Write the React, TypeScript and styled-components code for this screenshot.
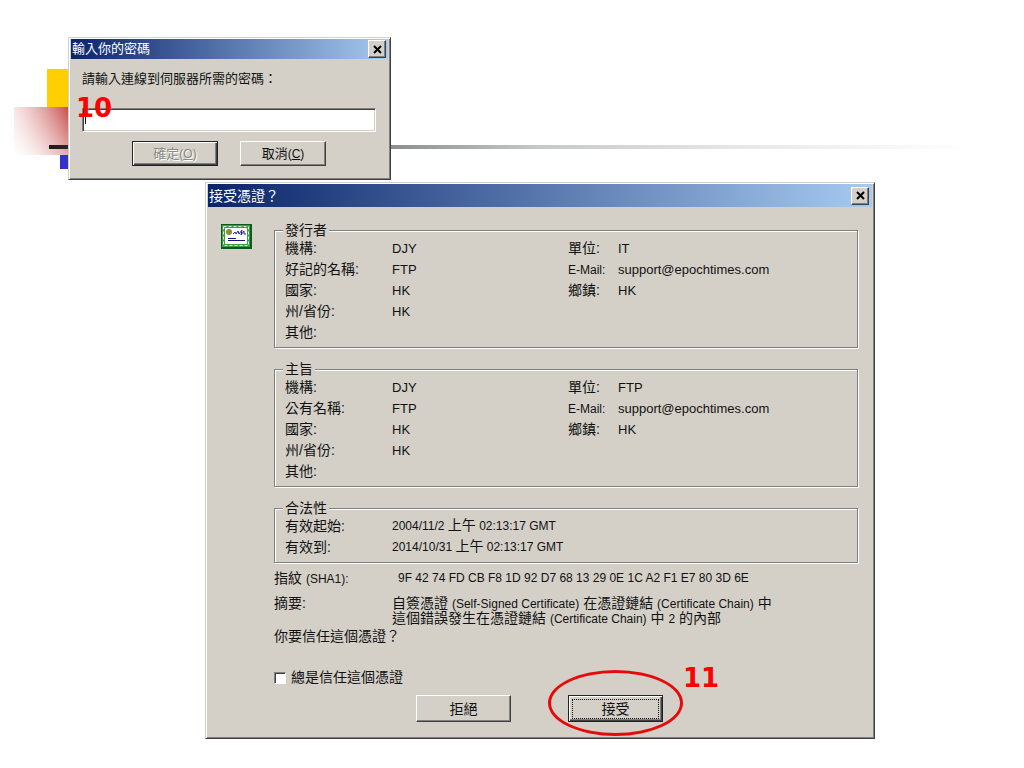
import React from "react";
import styled, { createGlobalStyle, css } from "styled-components";

const face = "#d4d0c8";
const sans = `"Liberation Sans", "Noto Sans CJK TC", sans-serif`;

const GlobalStyle = createGlobalStyle`
  * { box-sizing: border-box; }
  body { margin: 0; background: #fff; color: #111; font-family: ${sans}; }
`;

const Slide = styled.main`
  position: relative;
  min-height: 100vh;
  overflow: hidden;
  background: #fff;
`;

const YellowBlock = styled.div`
  position: absolute;
  left: 47px;
  top: 69px;
  width: 60px;
  height: 50px;
  background: #ffcf01;
`;

const RedBlock = styled.div`
  position: absolute;
  left: 14px;
  top: 107px;
  width: 60px;
  height: 48px;
  background:
    linear-gradient(to top right, #fff 0%, rgba(255, 255, 255, 0.6) 40%, rgba(255, 255, 255, 0) 100%),
    linear-gradient(to right, #f0cccc 0%, #bf3636 100%);
`;

const BlueBlock = styled.div`
  position: absolute;
  left: 60px;
  top: 155px;
  width: 50px;
  height: 14px;
  background: #3333cc;
`;

const Rule = styled.div`
  position: absolute;
  left: 49px;
  right: 54px;
  top: 145px;
  height: 4px;
  background: linear-gradient(to right, #1c1c1c 0%, #2a2a2a 3%, #8c8e8d 37%, #c6c7c7 53%, #e6e6e6 74%, #fff 100%);
`;

const Window = styled.section<{ $x: number; $y: number; $w: number }>`
  position: absolute;
  left: ${(p) => p.$x}px;
  top: ${(p) => p.$y}px;
  width: ${(p) => p.$w}px;
  padding: 1px;
  background: ${face};
  border: 1px solid;
  border-color: ${face} #404040 #404040 ${face};
  box-shadow: inset 1px 1px 0 #fff, inset -1px -1px 0 #808080;
`;

const TitleBar = styled.header<{ $large?: boolean }>`
  display: flex;
  align-items: center;
  justify-content: space-between;
  height: ${(p) => (p.$large ? 23 : 20)}px;
  margin: 0 1px;
  padding: 0 ${(p) => (p.$large ? 3 : 2)}px 0 1px;
  background: linear-gradient(to right, #0a246a, #a6caf0);
`;

const Title = styled.h1<{ $large?: boolean }>`
  margin: 0;
  color: #fff;
  font-size: ${(p) => (p.$large ? 14 : 13)}px;
  font-weight: 400;
  line-height: 18px;
`;

const raised = css`
  border: 1px solid;
  border-color: #fff #404040 #404040 #fff;
  box-shadow: inset -1px -1px 0 #808080;
  background: ${face};
`;

const CloseButton = styled.button`
  ${raised}
  display: grid;
  place-items: center;
  width: 18px;
  height: 18px;
  padding: 0;
`;

const Button = styled.button<{ $w: number; $h: number; $default?: boolean }>`
  ${raised}
  width: ${(p) => p.$w}px;
  height: ${(p) => p.$h}px;
  padding: 0;
  color: #111;
  font-family: ${sans};
  font-size: ${(p) => (p.$w > 90 ? 14 : 13)}px;
  line-height: 18px;
  ${(p) =>
    p.$default &&
    css`
      border-color: #222;
      box-shadow: inset 1px 1px 0 #fff, inset -1px -1px 0 #404040, inset -2px -2px 0 #808080;
    `}
  &:disabled {
    color: #8a8880;
    text-shadow: 1px 1px 0 #fff;
  }
`;

const FocusRing = styled.span`
  display: block;
  margin: 0 4px;
  outline: 1px dotted #111;
`;

const Latin = styled.span<{ $small?: boolean }>`
  font-size: ${(p) => (p.$small ? 12 : 13)}px;
  line-height: 1;
`;

const PasswordForm = styled.form`
  display: flex;
  flex-direction: column;
  padding: 11px 13px 12px 12px;
`;

const PasswordLabel = styled.label`
  font-size: 13px;
  line-height: 18px;
`;

const PasswordInput = styled.input`
  width: 100%;
  height: 24px;
  margin-top: 20px;
  border: 1px solid;
  border-color: #808080 #fff #fff #808080;
  border-radius: 0;
  outline: 0;
  background: linear-gradient(#111, #111) 2px 2px / 1px 13px no-repeat #fff;
  box-shadow: inset 1px 1px 0 #404040, inset -1px -1px 0 ${face};
`;

const ButtonRow = styled.div<{ $gap: number; $top: number }>`
  display: flex;
  justify-content: center;
  gap: ${(p) => p.$gap}px;
  margin-top: ${(p) => p.$top}px;
`;

const CertificateBody = styled.div`
  padding: 15px 15px 15px 14px;
`;

const Columns = styled.div`
  display: grid;
  grid-template-columns: 31px 1fr;
  column-gap: 22px;
`;

const CertificateIcon = styled.svg`
  display: block;
  margin-top: 2px;
`;

const Details = styled.div`
  display: flex;
  flex-direction: column;
  min-width: 0;
  font-size: 14px;
  line-height: 21px;
`;

const Group = styled.fieldset`
  min-width: 0;
  margin: 0 0 13px;
  padding: 0 0 4px 10px;
  border: 1px solid #808080;
  box-shadow: 1px 1px 0 #fff, inset 1px 1px 0 #fff;
  &:last-of-type {
    margin-bottom: 5px;
  }
`;

const GroupTitle = styled.legend`
  margin-left: -2px;
  padding: 0 2px;
  background: ${face};
  line-height: 16px;
`;

const FieldList = styled.dl`
  margin: 0;
`;

const FieldRow = styled.div<{ $split?: boolean }>`
  display: grid;
  grid-template-columns: ${(p) => (p.$split ? "107px 176px 50px 1fr" : "107px 1fr")};
  min-height: 21px;
`;

const Term = styled.dt`
  white-space: nowrap;
`;

const Value = styled.dd<{ $small?: boolean }>`
  margin: 0;
  font-size: ${(p) => (p.$small ? 12 : 13)}px;
  white-space: nowrap;
`;

const Cjk = styled.span`
  font-size: 14px;
  line-height: 1;
`;

const Fact = styled.div<{ $tight?: boolean }>`
  display: grid;
  grid-template-columns: ${(p) => (p.$tight ? "118px" : "124px")} 1fr;
  margin-top: ${(p) => (p.$tight ? 7 : 0)}px;
  line-height: ${(p) => (p.$tight ? 15 : 21)}px;
`;

const Fingerprint = styled.span`
  font-size: 12px;
`;

const Question = styled.p`
  margin: 0;
`;

const TrustLabel = styled.label`
  display: flex;
  align-items: center;
  gap: 5px;
  margin-top: 20px;
`;

const TrustBox = styled.input`
  appearance: none;
  width: 12px;
  height: 12px;
  margin: 0;
  border: 1px solid;
  border-color: #808080 #fff #fff #808080;
  background: #fff;
  box-shadow: inset 1px 1px 0 #404040;
`;

const StepNumber = styled.strong<{ $x: number; $y: number }>`
  position: absolute;
  left: ${(p) => p.$x}px;
  top: ${(p) => p.$y}px;
  color: #f00;
  font-family: "DejaVu Sans", sans-serif;
  font-size: 26px;
  font-weight: 700;
  line-height: 30px;
`;

const Highlight = styled.div`
  position: absolute;
  left: 548px;
  top: 670px;
  width: 135px;
  height: 66px;
  border: 3px solid #e60a0a;
  border-radius: 50%;
  pointer-events: none;
`;

type Entry = { term: string; value: string; sideTerm?: string; sideValue?: string };

const issuer: Entry[] = [
  { term: "機構", value: "DJY", sideTerm: "單位", sideValue: "IT" },
  { term: "好記的名稱", value: "FTP", sideTerm: "E-Mail", sideValue: "support@epochtimes.com" },
  { term: "國家", value: "HK", sideTerm: "鄉鎮", sideValue: "HK" },
  { term: "州/省份", value: "HK" },
  { term: "其他", value: "" },
];

const subject: Entry[] = [
  { term: "機構", value: "DJY", sideTerm: "單位", sideValue: "FTP" },
  { term: "公有名稱", value: "FTP", sideTerm: "E-Mail", sideValue: "support@epochtimes.com" },
  { term: "國家", value: "HK", sideTerm: "鄉鎮", sideValue: "HK" },
  { term: "州/省份", value: "HK" },
  { term: "其他", value: "" },
];

function CloseX() {
  return (
    <svg width="9" height="9" viewBox="0 0 9 9" aria-hidden="true">
      <path d="M1 1L8 8M8 1L1 8" stroke="#000" strokeWidth="2" />
    </svg>
  );
}

function Party({ title, entries }: { title: string; entries: Entry[] }) {
  return (
    <Group>
      <GroupTitle>{title}</GroupTitle>
      <FieldList>
        {entries.map((e) => (
          <FieldRow key={e.term} $split>
            <Term>{e.term}:</Term>
            <Value>{e.value}</Value>
            {e.sideTerm && (
              <>
                <Term>{e.sideTerm === "E-Mail" ? <Latin $small>E-Mail:</Latin> : `${e.sideTerm}:`}</Term>
                <Value>{e.sideValue}</Value>
              </>
            )}
          </FieldRow>
        ))}
      </FieldList>
    </Group>
  );
}

export default function App() {
  return (
    <>
      <GlobalStyle />
      <Slide>
        <YellowBlock />
        <RedBlock />
        <BlueBlock />
        <Rule />

        <Window $x={68} $y={37} $w={323}>
          <TitleBar>
            <Title>輸入你的密碼</Title>
            <CloseButton aria-label="關閉">
              <CloseX />
            </CloseButton>
          </TitleBar>
          <PasswordForm onSubmit={(e) => e.preventDefault()}>
            <PasswordLabel htmlFor="password">請輸入連線到伺服器所需的密碼：</PasswordLabel>
            <PasswordInput id="password" type="password" />
            <ButtonRow $gap={22} $top={9}>
              <Button type="submit" $w={86} $h={25} $default disabled>
                確定<Latin $small>(<u>O</u>)</Latin>
              </Button>
              <Button type="button" $w={86} $h={25}>
                取消<Latin $small>(<u>C</u>)</Latin>
              </Button>
            </ButtonRow>
          </PasswordForm>
        </Window>

        <Window $x={205} $y={182} $w={670}>
          <TitleBar $large>
            <Title $large>接受憑證？</Title>
            <CloseButton aria-label="關閉">
              <CloseX />
            </CloseButton>
          </TitleBar>
          <CertificateBody>
            <Columns>
              <CertificateIcon width="31" height="25" viewBox="0 0 31 25" aria-hidden="true">
                <rect width="31" height="25" fill="#0c5a1c" />
                <rect x="1" y="1" width="28" height="22" fill="#3f9a4a" />
                <rect x="2.5" y="2.5" width="25" height="19" fill="none" stroke="#d8eed4" strokeDasharray="3 2" />
                <rect x="4" y="4" width="22" height="16" fill="#fff" />
                <circle cx="8" cy="8" r="3" fill="#8c8a3c" />
                <path d="M12 10l2-2 1 2 2-3 1 3 3-4-1 5 3-4v3h2" fill="none" stroke="#22229a" />
                <path d="M7 14.500h8M7 16.500h17" stroke="#14147a" />
              </CertificateIcon>
              <Details>
                <Party title="發行者" entries={issuer} />
                <Party title="主旨" entries={subject} />
                <Group>
                  <GroupTitle>合法性</GroupTitle>
                  <FieldList>
                    <FieldRow>
                      <Term>有效起始:</Term>
                      <Value $small>2004/11/2 <Cjk>上午</Cjk> 02:13:17 GMT</Value>
                    </FieldRow>
                    <FieldRow>
                      <Term>有效到:</Term>
                      <Value $small>2014/10/31 <Cjk>上午</Cjk> 02:13:17 GMT</Value>
                    </FieldRow>
                  </FieldList>
                </Group>
                <Fact>
                  <span>指紋 <Latin $small>(SHA1):</Latin></span>
                  <Fingerprint>9F 42 74 FD CB F8 1D 92 D7 68 13 29 0E 1C A2 F1 E7 80 3D 6E</Fingerprint>
                </Fact>
                <Fact $tight>
                  <span>摘要:</span>
                  <span>
                    自簽憑證 <Latin $small>(Self-Signed Certificate)</Latin> 在憑證鏈結 <Latin $small>(Certificate Chain)</Latin> 中
                    <br />
                    這個錯誤發生在憑證鏈結 <Latin $small>(Certificate Chain)</Latin> 中 <Latin $small>2</Latin> 的內部
                  </span>
                </Fact>
                <Question>你要信任這個憑證？</Question>
                <TrustLabel>
                  <TrustBox type="checkbox" />
                  總是信任這個憑證
                </TrustLabel>
              </Details>
            </Columns>
            <ButtonRow $gap={57} $top={7}>
              <Button type="button" $w={95} $h={27}>拒絕</Button>
              <Button type="button" $w={95} $h={27} $default>
                <FocusRing>接受</FocusRing>
              </Button>
            </ButtonRow>
          </CertificateBody>
        </Window>

        <StepNumber $x={76} $y={93}>10</StepNumber>
        <StepNumber $x={683} $y={663}>11</StepNumber>
        <Highlight />
      </Slide>
    </>
  );
}
